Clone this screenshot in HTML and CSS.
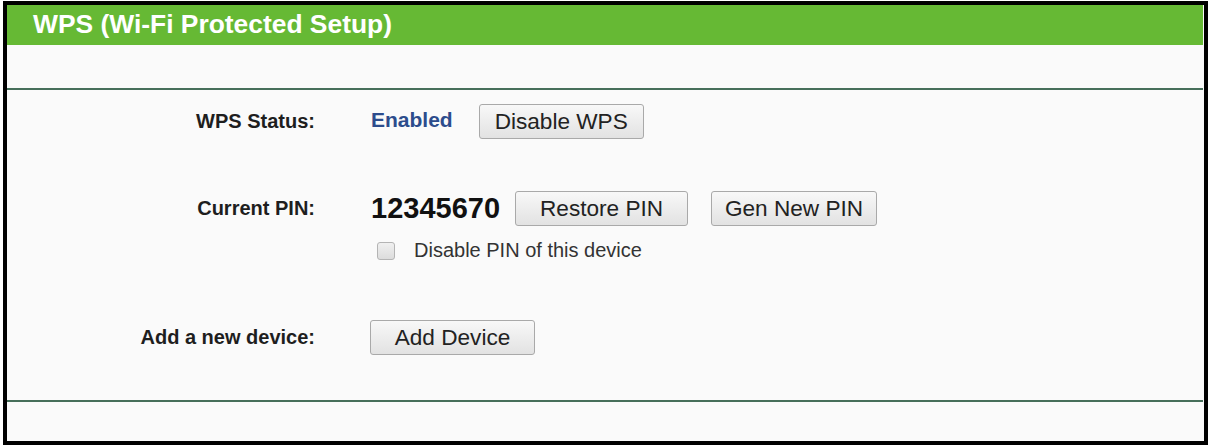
FILE: index.html
```html
<!DOCTYPE html>
<html lang="en">
<head>
    <meta charset="UTF-8">
    <meta name="viewport" content="width=device-width, initial-scale=1.0">
    <title>WPS (Wi-Fi Protected Setup)</title>
    <link rel="stylesheet" href="styles.css">
</head>
<body>
    <div class="frame">
        <div class="title-bar">WPS (Wi-Fi Protected Setup)</div>
        <div class="title-space"></div>
        <div class="rule"></div>

        <div class="form">
            <div class="row row-status">
                <div class="label">WPS Status:</div>
                <div class="value">
                    <span class="status">Enabled</span>
                    <button class="btn btn-disable">Disable WPS</button>
                </div>
            </div>

            <div class="row row-pin">
                <div class="label">Current PIN:</div>
                <div class="value">
                    <span class="pin">12345670</span>
                    <button class="btn btn-restore">Restore PIN</button>
                    <button class="btn btn-gen">Gen New PIN</button>
                </div>
            </div>

            <div class="row row-check">
                <div></div>
                <label class="check">
                    <input type="checkbox" class="check-box">
                    <span>Disable PIN of this device</span>
                </label>
            </div>

            <div class="row row-add">
                <div class="label">Add a new device:</div>
                <div class="value">
                    <button class="btn btn-add">Add Device</button>
                </div>
            </div>
        </div>

        <div class="rule"></div>
    </div>
</body>
</html>
```

FILE: styles.css
```css
html, body { margin: 0; padding: 0; background: #fff; }
body { font-family: "Liberation Sans", Arial, sans-serif; color: #1e1e1e; }

.frame {
    margin: 1px 4px 0 3px;
    height: 436px;
    border: 4px solid #000;
    background: #fafafa;
}

.title-bar {
    height: 40px; line-height: 39px; margin-right: 1px;
    padding-left: 26px;
    background: #66b934; color: #fff;
    font-size: 26.4px; font-weight: bold;
}
.title-space { height: 43px; }
.rule { height: 2px; margin-right: 1px; background: #466f5a; }

.form { height: 310px; }
.row {
    display: grid; grid-template-columns: 308px auto; column-gap: 56px;
    align-items: center;
}
.row-status { padding-top: 14px; height: 35px; }
.row-pin { margin-top: 52px; height: 35px; }
.row-check { margin-top: 14px; height: 18px; }
.row-add { margin-top: 62px; height: 35px; }

.label { text-align: right; font-size: 20px; font-weight: bold; color: #1e1e1e; }
.value { display: flex; align-items: center; }

.status { font-size: 21px; font-weight: bold; color: #2c4c8c; margin-right: 26px; position: relative; top: -2px; }
.pin { font-size: 29px; font-weight: bold; color: #111; margin-right: 15px; }

.btn {
    height: 35px; padding: 0;
    white-space: nowrap;
    font-family: "Liberation Sans", Arial, sans-serif; font-size: 22.6px; color: #222;
    background: linear-gradient(#f8f8f8, #e2e2e2);
    border: 1px solid #a9a9a9; border-radius: 3px;
}
.btn-disable { width: 165px; }
.btn-restore { width: 173px; margin-right: 23px; }
.btn-gen { width: 166px; }
.btn-add { width: 165px; margin-left: -1px; }

.check { display: flex; align-items: center; font-size: 20px; color: #333; position: relative; top: -1px; }
.check-box {
    appearance: none; -webkit-appearance: none;
    width: 18px; height: 18px; margin: 0 19px 0 6px;
    border: 1px solid #b4b4b4; border-radius: 3px;
    background: linear-gradient(#f0f0f0, #dcdcdc);
}
```
